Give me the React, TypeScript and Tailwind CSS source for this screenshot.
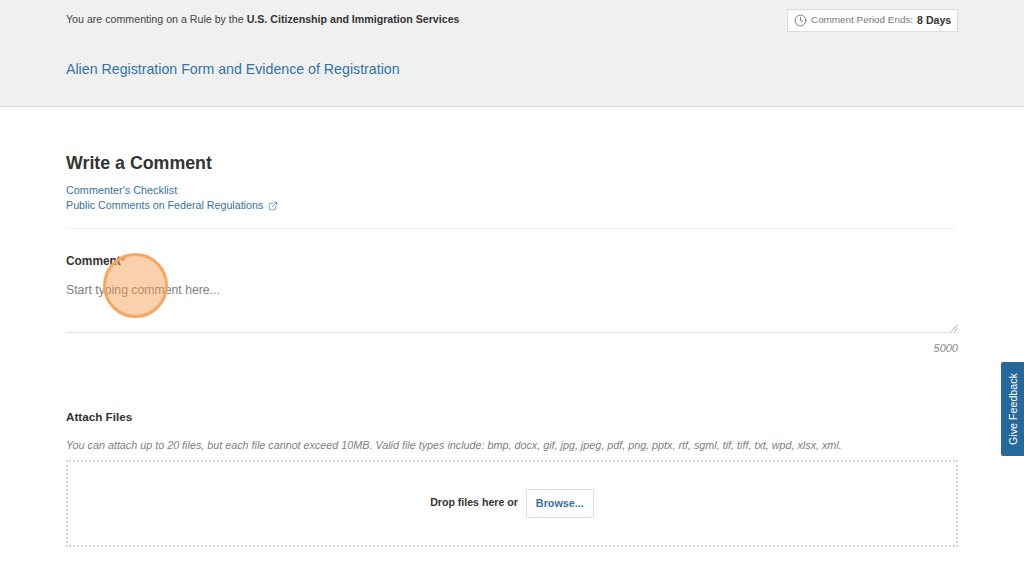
import { Clock, ExternalLink } from 'lucide-react';

const font = "font-['Liberation_Sans',Arial,sans-serif]";

export default function App() {
  return (
    <div className={`relative h-[572px] w-[1024px] overflow-hidden bg-white ${font} text-[#333]`}>
      <header className="h-[107px] border-b border-[#d9d9d9] bg-[#f0f0f0] px-[66px] pt-[9px]">
        <div className="flex items-start justify-between">
          <p className="mt-[2px] text-[10.65px] leading-[16px] text-[#444]">
            You are commenting on a Rule by the <b className="text-[#333]">U.S. Citizenship and Immigration Services</b>
          </p>
          <div className="flex h-[23px] w-[171px] items-center whitespace-nowrap border border-[#dcdcdc] bg-white pl-[6px] text-[9.9px] text-[#777]">
            <Clock className="mr-[4px] h-[13px] w-[13px] shrink-0 text-[#777]" strokeWidth={1.8} />
            <span>Comment Period Ends:</span>
            <b className="ml-[4px] text-[10.6px] text-[#333]">8 Days</b>
          </div>
        </div>
        <h2 className="mt-[27px] text-[14.2px] leading-[20px] text-[#3473a5]">Alien Registration Form and Evidence of Registration</h2>
      </header>

      <main className="px-[66px]">
        <h1 className="mt-[44px] text-[17.8px] leading-[24px] font-bold text-[#333]">Write a Comment</h1>
        <div className="mt-[8px] text-[10.7px] leading-[15px] text-[#3473a5]">
          <a className="block text-[10.85px]">Commenter's Checklist</a>
          <a className="flex items-center">
            Public Comments on Federal Regulations
            <ExternalLink className="ml-[5px] h-[10px] w-[10px]" strokeWidth={1.6} />
          </a>
        </div>
        <hr className="mt-[15px] w-[890px] border-[#f0f0f0]" />

        <label className="mt-[24px] block text-[11.9px] leading-[16px] font-bold text-[#333]">
          Comment<span className="text-[#c9542b]">*</span>
        </label>
        <div className="relative mt-[8px] h-[56px] w-[892px] border-b border-[#e2e2e2] pt-[5px] text-[12.25px] leading-[16px] text-[#808080]">
          Start typing comment here...
          <svg className="absolute right-0 bottom-0 h-[8px] w-[8px]" viewBox="0 0 8 8" fill="none" stroke="#888" strokeWidth="0.8">
            <path d="M1 7.5 7.5 1M4.5 7.5 7.5 4.5" />
          </svg>
        </div>
        <p className="mt-[8px] w-[892px] text-right text-[11px] leading-[14px] text-[#888] italic">5000</p>

        <h3 className="mt-[54px] text-[11.7px] leading-[16px] font-bold text-[#333]">Attach Files</h3>
        <p className="mt-[13px] text-[10.78px] leading-[14px] text-[#808080] italic">
          You can attach up to 20 files, but each file cannot exceed 10MB. Valid file types include: bmp, docx, gif, jpg, jpeg, pdf, png, pptx, rtf, sgml, tif, tiff, txt, wpd, xlsx, xml.
        </p>
        <div className="mt-[8px] flex h-[87px] w-[892px] items-center justify-center gap-[8px] border-2 border-dotted border-[#d6d6d6]">
          <span className="mb-[2px] text-[10.6px] font-bold text-[#333]">Drop files here or</span>
          <button className="h-[29px] w-[68px] rounded-[2px] border border-[#dcdcdc] bg-white text-[10.8px] font-bold text-[#3473a5]">Browse...</button>
        </div>
      </main>

      <div className="absolute top-[362px] right-0 flex h-[94px] w-[23px] items-center justify-center rounded-l-[2px] bg-[#27689c]">
        <span className="-rotate-90 whitespace-nowrap text-[10.7px] text-white">Give Feedback</span>
      </div>

      <div className="absolute top-[253px] left-[103px] h-[65px] w-[65px] rounded-full border-[3px] border-[#f4a864] bg-[#f79a4a]/45" />
    </div>
  );
}
